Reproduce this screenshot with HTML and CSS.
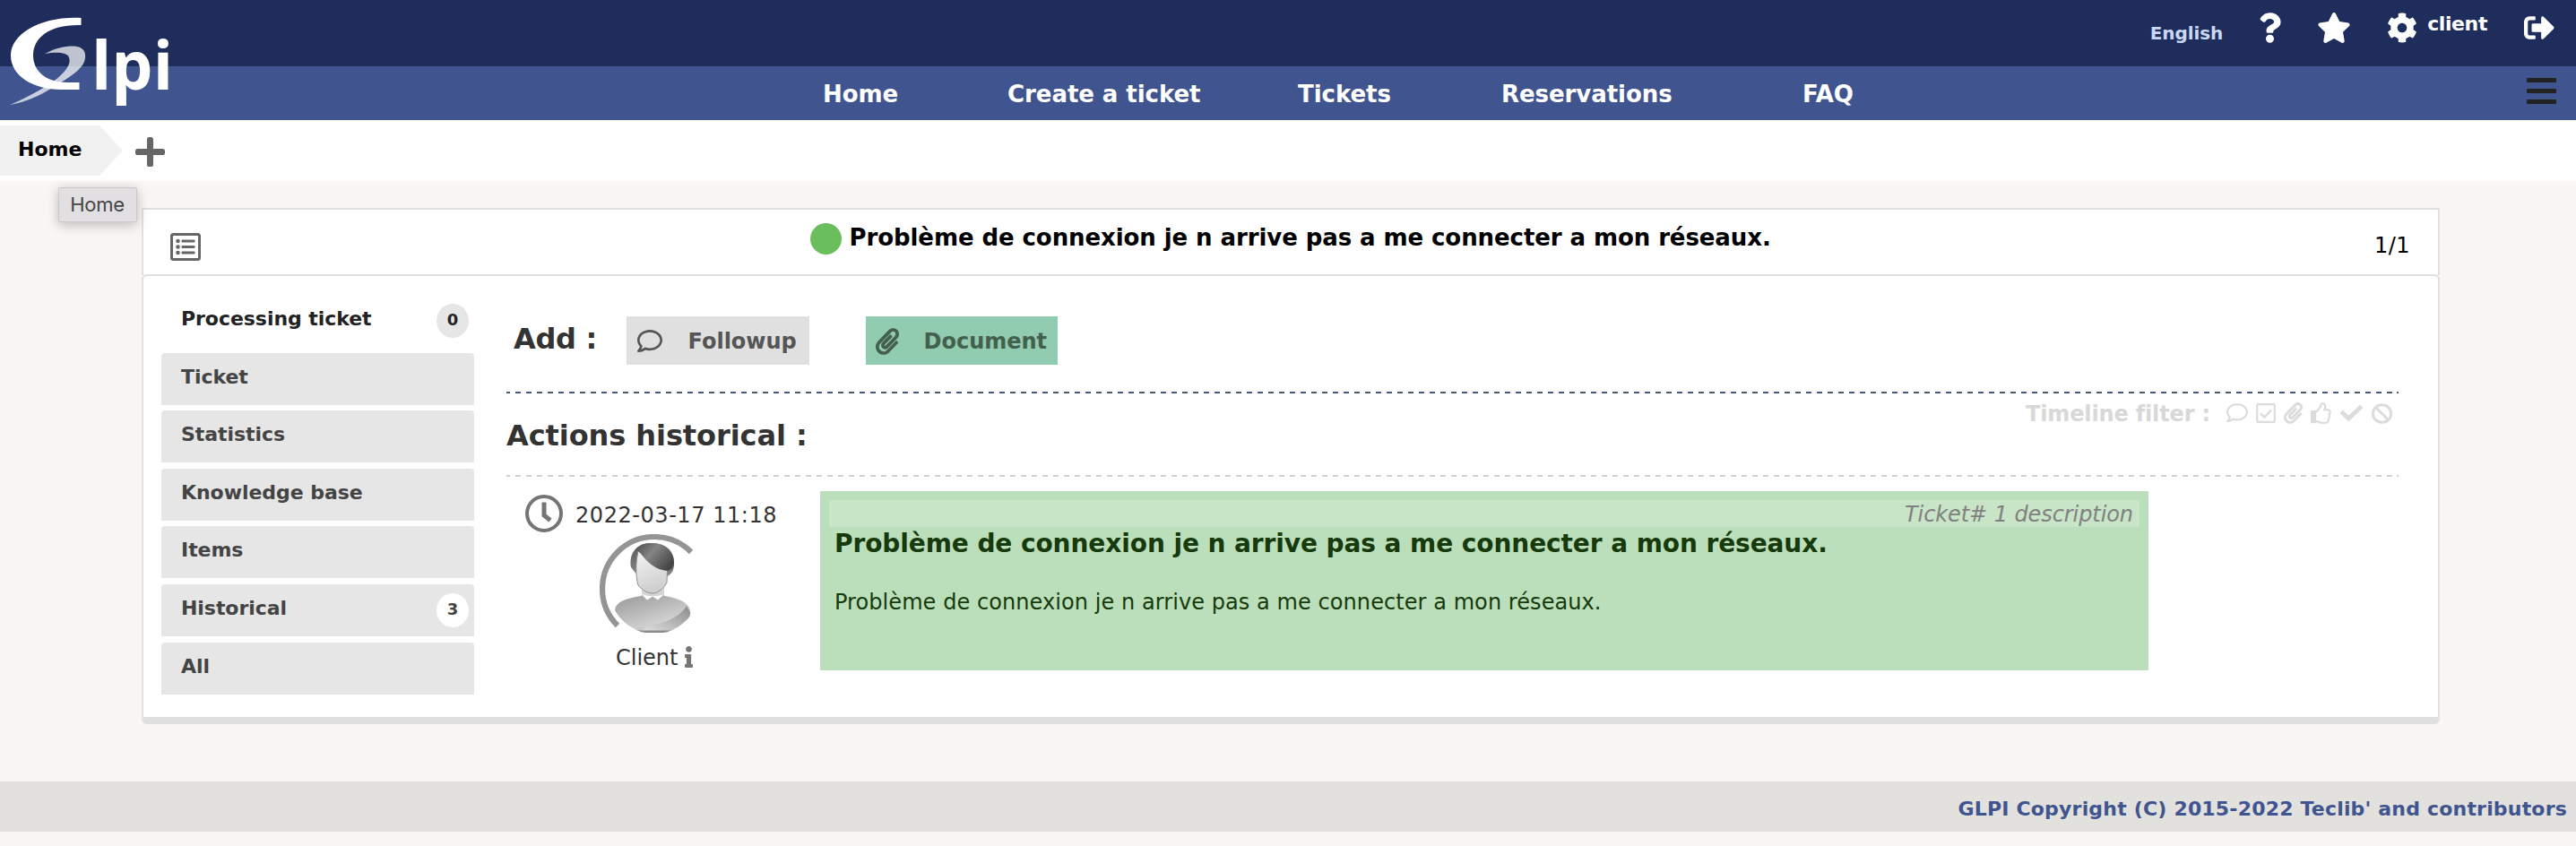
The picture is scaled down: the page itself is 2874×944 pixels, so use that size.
FILE: index.html
```html
<!DOCTYPE html>
<html lang="en">
<head>
<meta charset="utf-8">
<title>GLPI - Ticket</title>
<link rel="stylesheet" href="styles.css">
</head>
<body>
<svg class="sprite" width="0" height="0">
  <symbol id="comment" viewBox="0 32 512 448" preserveAspectRatio="none"><path d="M256 32C114.6 32 0 125.1 0 240c0 47.6 19.9 91.2 52.9 126.3C38 405.7 7 439.1 6.5 439.5c-6.6 7-8.4 17.2-4.6 26S14.4 480 24 480c61.5 0 110-25.7 139.1-46.3C192 442.8 223.2 448 256 448c141.4 0 256-93.1 256-208S397.4 32 256 32zm0 368c-26.7 0-53.1-4.1-78.4-12.1l-22.7-7.2-19.5 13.8c-14.3 10.1-33.9 21.4-57.5 29 7.3-12.1 14.4-25.7 19.9-40.2l10.6-28.1-20.6-21.8C69.7 314.1 48 282.2 48 240c0-88.2 93.3-160 208-160s208 71.8 208 160-93.3 160-208 160z"/></symbol>
  <symbol id="clip" viewBox="0 0 448 512"><path d="M43.246 466.142c-58.43-60.289-57.341-157.511 1.386-217.581L254.392 34c44.316-45.332 116.351-45.336 160.671 0 43.89 44.894 43.943 117.329 0 162.276L232.214 383.128c-29.855 30.537-78.633 30.111-107.982-.998-28.275-29.97-27.368-77.473 1.452-106.953l143.743-146.835c6.182-6.314 16.312-6.422 22.626-.241l22.861 22.379c6.315 6.182 6.422 16.312.241 22.626L171.427 319.927c-4.932 5.045-5.236 13.428-.648 18.292 4.372 4.634 11.245 4.711 15.688.165l182.849-186.851c19.613-20.062 19.613-52.725-.011-72.798-19.189-19.627-49.957-19.637-69.154 0L90.39 293.295c-34.763 35.56-35.299 93.12-1.191 128.313 34.01 35.093 88.985 35.137 123.058.286l172.06-175.999c6.177-6.319 16.307-6.433 22.626-.256l22.877 22.364c6.319 6.177 6.434 16.307.256 22.626l-172.06 175.998c-59.576 60.938-155.943 60.216-214.77-.485z"/></symbol>
</svg>

<header class="top">
  <div class="lang">English</div>
  <svg class="i-question" viewBox="0 0 384 512"><path d="M202.021 0C122.202 0 70.503 32.703 29.914 91.026c-7.363 10.58-5.093 25.086 5.178 32.874l43.138 32.709c10.373 7.865 25.132 6.026 33.253-4.148 25.049-31.381 43.63-49.449 82.757-49.449 30.764 0 68.816 19.799 68.816 49.631 0 22.552-18.617 34.134-48.993 51.164-35.423 19.86-82.299 44.576-82.299 106.405V320c0 13.255 10.745 24 24 24h72.471c13.255 0 24-10.745 24-24v-5.773c0-42.86 125.268-44.645 125.268-160.627C377.504 66.256 286.902 0 202.021 0zM192 373.459c-38.196 0-69.271 31.075-69.271 69.271 0 38.195 31.075 69.27 69.271 69.27s69.271-31.075 69.271-69.271-31.075-69.27-69.271-69.27z"/></svg>
  <svg class="i-star" viewBox="0 0 576 512"><path d="M259.3 17.8L194 150.2 47.9 171.5c-26.2 3.8-36.7 36.1-17.7 54.6l105.7 103-25 145.5c-4.5 26.3 23.2 46 46.4 33.7L288 439.6l130.7 68.7c23.2 12.2 50.9-7.4 46.4-33.7l-25-145.5 105.7-103c19-18.5 8.5-50.8-17.7-54.6L382 150.2 316.7 17.8c-11.7-23.6-45.6-23.9-57.4 0z"/></svg>
  <svg class="i-cog" viewBox="0 0 512 512"><path d="M487.4 315.7l-42.6-24.6c4.3-23.2 4.3-47 0-70.2l42.6-24.6c4.9-2.8 7.1-8.6 5.5-14-11.1-35.6-30-67.8-54.7-94.6-3.8-4.1-10-5.1-14.8-2.3L380.8 110c-17.9-15.4-38.5-27.3-60.8-35.1V25.8c0-5.6-3.9-10.5-9.4-11.7-36.7-8.2-74.3-7.8-109.2 0-5.5 1.2-9.4 6.1-9.4 11.7V75c-22.2 7.9-42.8 19.8-60.8 35.1L88.7 85.5c-4.9-2.8-11-1.9-14.8 2.3-24.7 26.7-43.6 58.9-54.7 94.6-1.7 5.4.6 11.2 5.5 14L67.3 221c-4.3 23.2-4.3 47 0 70.2l-42.6 24.6c-4.9 2.8-7.1 8.6-5.5 14 11.1 35.6 30 67.8 54.7 94.6 3.8 4.1 10 5.1 14.8 2.3l42.6-24.6c17.9 15.4 38.5 27.3 60.8 35.1v49.2c0 5.6 3.9 10.5 9.4 11.7 36.7 8.2 74.3 7.8 109.2 0 5.5-1.2 9.4-6.1 9.4-11.7v-49.2c22.2-7.9 42.8-19.8 60.8-35.1l42.6 24.6c4.9 2.8 11 1.9 14.8-2.3 24.7-26.7 43.6-58.9 54.7-94.6 1.500-5.500-.700-11.300-5.600-14.100zM256 336c-44.100 0-80-35.900-80-80s35.900-80 80-80 80 35.900 80 80-35.900 80-80 80z"/></svg>
  <div class="user">client</div>
  <svg class="i-out" viewBox="0 0 512 512"><path d="M497 273L329 441c-15 15-41 4.500-41-17v-96H152c-13.300 0-24-10.700-24-24v-96c0-13.300 10.700-24 24-24h136V88c0-21.400 25.900-32 41-17l168 168c9.300 9.400 9.300 24.600 0 34zM192 436v-40c0-6.600-5.400-12-12-12H96c-17.700 0-32-14.300-32-32V160c0-17.700 14.300-32 32-32h84c6.600 0 12-5.400 12-12V76c0-6.600-5.400-12-12-12H96c-53 0-96 43-96 96v192c0 53 43 96 96 96h84c6.600 0 12-5.400 12-12z"/></svg>
</header>
<nav class="menu">
  <a>Home</a><a>Create a ticket</a><a>Tickets</a><a>Reservations</a><a>FAQ</a>
  <div class="burger"><i></i><i></i><i></i></div>
</nav>
<svg class="logo" width="200" height="130" viewBox="0 0 200 130">
  <path fill="#fff" fill-opacity=".72" d="M50 60C62 53 75 51 83 51.500C92 52 96 57 95 65C94 75 82 83 68 92C50 104 30 114 11 117C30 109 48 99 62 89C72 81 80 72 77 64C75 58 62 58 50 60Z"/>
  <path fill="#fff" d="M90.500 20C45 18 12 38 12 62C12 85 38 100 68 100L88.500 100L88.500 92L75 92C50 92 37 78 37 62C37 42 55 27 90.500 28Z"/>
  <text class="logo-text" x="102" y="99.500" textLength="91" lengthAdjust="spacingAndGlyphs">lpi</text>
</svg>
<div class="crumbs">
  <div class="crumb">Home</div>
  <svg class="i-plus" viewBox="0 32 448 448" preserveAspectRatio="none"><path d="M416 208H272V64c0-17.670-14.330-32-32-32h-32c-17.670 0-32 14.330-32 32v144H32c-17.670 0-32 14.330-32 32v32c0 17.670 14.330 32 32 32h144v144c0 17.670 14.330 32 32 32h32c17.670 0 32-14.330 32-32V304h144c17.670 0 32-14.330 32-32v-32c0-17.670-14.330-32-32-32z"/></svg>
  <div class="tip">Home</div>
</div>

<main class="page">
  <div class="head">
    <svg class="i-list" viewBox="0 0 34 31" fill="none"><rect x="1.500" y="1.500" width="31" height="28" rx="2" stroke="#666" stroke-width="3"/><g fill="#666"><circle cx="8.500" cy="9" r="2.300"/><circle cx="8.500" cy="15.500" r="2.300"/><circle cx="8.500" cy="22" r="2.300"/><rect x="12.500" y="7.400" width="15" height="3.200" rx="1"/><rect x="12.500" y="13.900" width="15" height="3.200" rx="1"/><rect x="12.500" y="20.400" width="15" height="3.200" rx="1"/></g></svg>
    <div class="title"><span class="dot"></span><span>Problème de connexion je n arrive pas a me connecter a mon réseaux.</span></div>
    <div class="count">1/1</div>
  </div>
  <div class="body">
    <ul class="tabs">
      <li class="tab active">Processing ticket<b>0</b></li>
      <li class="tab">Ticket</li>
      <li class="tab">Statistics</li>
      <li class="tab">Knowledge base</li>
      <li class="tab">Items</li>
      <li class="tab">Historical<b>3</b></li>
      <li class="tab">All</li>
    </ul>
    <section class="content">
      <div class="add">
        <h2>Add :</h2>
        <div class="btn follow"><svg><use href="#comment"/></svg><span>Followup</span></div>
        <div class="btn doc"><svg><use href="#clip"/></svg><span>Document</span></div>
      </div>
      <div class="rule blue"></div>
      <div class="hist">
        <h2>Actions historical :</h2>
        <div class="filter">
          <span>Timeline filter :</span>
          <svg class="f1"><use href="#comment"/></svg>
          <svg class="f2" viewBox="0 0 22 22" fill="none" stroke="#dcdcdc"><rect x="1.200" y="1.200" width="19.600" height="19.600" rx="1.500" stroke-width="2.200"/><path d="M5 11.500L9.500 15.500L17 7.500" stroke-width="2.500"/></svg>
          <svg class="f3"><use href="#clip"/></svg>
          <svg class="f4" viewBox="0 0 484 512" preserveAspectRatio="none"><path d="M466.270 286.690C475.040 271.840 480 256 480 236.850c0-44.015-37.218-85.580-85.820-85.580H357.700c4.920-12.810 8.850-28.130 8.850-46.540C366.550 31.936 328.860 0 271.280 0c-61.607 0-58.093 94.933-71.760 108.600-22.747 22.747-49.615 66.447-68.760 83.400H32c-17.673 0-32 14.327-32 32v240c0 17.673 14.327 32 32 32h64c14.893 0 27.408-10.174 30.978-23.950 44.509 1.001 75.060 39.940 177.802 39.940 7.220 0 15.220.010 22.220.010 77.117 0 111.986-39.423 112.940-95.330 13.319-18.425 20.299-43.122 17.340-66.990 9.854-18.452 13.664-40.343 8.990-62.990zm-61.750 53.830c12.560 21.130 1.260 49.410-13.940 57.570 7.700 48.780-17.608 65.900-53.120 65.900h-37.820c-71.639 0-118.029-37.820-171.640-37.820V240h10.920c28.360 0 67.980-70.890 94.540-97.460 28.360-28.360 18.910-75.630 37.820-94.540 47.270 0 47.270 32.980 47.270 56.730 0 39.170-28.360 56.720-28.360 94.540h103.990c21.110 0 37.730 18.910 37.820 37.820.090 18.900-12.820 37.810-22.270 37.810 13.489 14.555 16.371 45.236-5.210 65.620z"/></svg>
          <svg class="f5" viewBox="0 65 512 382" preserveAspectRatio="none"><path d="M173.898 439.404l-166.400-166.400c-9.997-9.997-9.997-26.206 0-36.204l36.203-36.204c9.997-9.998 26.207-9.998 36.204 0L192 312.690 432.095 72.596c9.997-9.997 26.207-9.997 36.204 0l36.203 36.204c9.997 9.997 9.997 26.206 0 36.204l-294.400 294.401c-9.998 9.997-26.207 9.997-36.204-.001z"/></svg>
          <svg class="f6" viewBox="0 0 24 23" fill="none" stroke="#dcdcdc" stroke-width="3"><ellipse cx="12" cy="11.500" rx="10.200" ry="9.800"/><path d="M5 4.500L19 18.500"/></svg>
        </div>
      </div>
      <div class="rule"></div>
      <div class="item">
        <div class="who">
          <div class="when">
            <svg class="i-clock" viewBox="0 0 42 42" fill="none" stroke="#757575"><circle cx="21" cy="21" r="19" stroke-width="4"/><path d="M21 8.500V23L28 28.500" stroke-width="5"/></svg>
            <span>2022-03-17 11:18</span>
          </div>
          <svg class="avatar" viewBox="669 596 122 122">
            <defs>
              <clipPath id="round"><circle cx="730" cy="657" r="50"/></clipPath>
              <linearGradient id="hair" x1="0" y1="0" x2="1" y2=".6"><stop offset="0" stop-color="#4a4a4a"/><stop offset=".45" stop-color="#858585"/><stop offset="1" stop-color="#484848"/></linearGradient>
              <linearGradient id="side" x1="0" y1="0" x2="0" y2="1"><stop offset="0" stop-color="#5a5a5a"/><stop offset="1" stop-color="#858585"/></linearGradient>
              <linearGradient id="face" x1="0" y1="0" x2=".3" y2="1"><stop offset="0" stop-color="#f4f4f4"/><stop offset="1" stop-color="#cfcfcf"/></linearGradient>
              <linearGradient id="coat" x1="0" y1="0" x2=".6" y2="1"><stop offset="0" stop-color="#999"/><stop offset="1" stop-color="#dedede"/></linearGradient>
              <linearGradient id="fold" x1="1" y1="0" x2="0" y2="1"><stop offset="0" stop-color="#8a8a8a"/><stop offset="1" stop-color="#e2e2e2"/></linearGradient>
            </defs>
            <path d="M689 698A57.900 57.900 0 0 1 771 616" fill="none" stroke="#949494" stroke-width="6.200"/>
            <g clip-path="url(#round)">
              <path d="M716 656V668H741V656Z" fill="#d4d4d4"/>
              <path d="M686 680C689 669 702 668 716 664.500L722 669L728 665L734 669L740 664.500C752 667 768 670 770 682C771 692 764 699 750 706H710C697 700 686 692 686 680Z" fill="url(#coat)"/>
              <path d="M741 665C754 668 764 672 766 677C760 687 745 696 722 699C710 698 704 705 712 706H750C764 699 771 692 770 682C768 670 752 667 741 665Z" fill="#c9c9c9"/>
              <path d="M766 676C759 688 742 696 722 698L716 705H748C764 699 771 692 770 683Z" fill="url(#fold)"/>
              <path d="M716.500 663L722 669.500L728 665.500L734 669.500L740 663.500L734 665H723Z" fill="#fff"/>
              <path d="M711 703.500H749V706H711Z" fill="#8c8c8c"/>
            </g>
            <path d="M704 633C702 622 706 606 727 606C748 606 753 621 752 629C752 637 749 641 744 643L712 643Z" fill="url(#side)"/>
            <path d="M712 615C709 628 709 642 712 653C717 659 723 662 728 662C734 662 741 656 744 650L744.500 636C732 634 722 626 715 614Z" fill="url(#face)" stroke="#8f8f8f" stroke-width="1"/>
            <path d="M710 613C714 607 720 606 727 606C744 606 752 617 752 628C752 632 750 635 745 637C731 636 722 627 715 618Z" fill="url(#hair)"/>
          </svg>
          <div class="name"><span>Client</span><svg class="i-info" viewBox="0 0 192 512" preserveAspectRatio="none"><path d="M20 424.229h20V279.771H20c-11.046 0-20-8.954-20-20V212c0-11.046 8.954-20 20-20h112c11.046 0 20 8.954 20 20v212.229h20c11.046 0 20 8.954 20 20V492c0 11.046-8.954 20-20 20H20c-11.046 0-20-8.954-20-20v-47.771c0-11.046 8.954-20 20-20zM96 0C56.235 0 24 32.235 24 72s32.235 72 72 72 72-32.235 72-72S135.764 0 96 0z"/></svg></div>
        </div>
        <article class="card">
          <div class="label"><span>Ticket# 1 description</span></div>
          <h3>Problème de connexion je n arrive pas a me connecter a mon réseaux.</h3>
          <p>Problème de connexion je n arrive pas a me connecter a mon réseaux.</p>
        </article>
      </div>
    </section>
  </div>
</main>
<footer class="foot"><span>GLPI Copyright (C) 2015-2022 Teclib' and contributors</span></footer>
</body>
</html>
```
FILE: styles.css
```css
* { box-sizing: border-box; }
body { margin: 0; height: 944px; overflow: hidden; background: #f8f7f3; font-family: Verdana, "DejaVu Sans", sans-serif; position: relative; }
h2, h3, p, ul { margin: 0; padding: 0; }
svg { display: block; flex: none; }
.sprite { position: absolute; }
span, a { white-space: nowrap; }

.top { height: 74px; background: #1f2d5c; display: flex; justify-content: flex-end; padding-right: 24px; color: #fff; fill: #fff; font-weight: bold; }
.lang { font-size: 20px; line-height: 74px; color: #c9d8f5; margin-right: 40px; letter-spacing: -.1px; }
.i-question { width: 25px; height: 34px; margin: 14px 40px 0 0; }
.i-star { width: 38px; height: 34px; margin: 14px 40px 0 0; }
.i-cog { width: 34px; height: 34px; margin: 14px 11px 0 0; }
.user { font-size: 22px; line-height: 54px; height: 54px; letter-spacing: -.4px; margin-right: 41px; }
.i-out { width: 34px; height: 34px; margin-top: 14px; }

.menu { height: 60px; background: #40558f; display: grid; grid-template-columns: 206px 324px 227px 336px auto 1fr; padding: 1px 22px 0 918px; color: #fff; font-size: 26px; font-weight: bold; line-height: 60px; letter-spacing: -.05px; }
.burger { justify-self: end; width: 33px; padding-top: 12px; display: flex; flex-direction: column; gap: 7px; }
.burger i { height: 5px; background: #222; border-radius: 1px; }
.logo { position: absolute; left: 0; top: 0; }
.logo-text { font: bold 76px "Open Sans", sans-serif; fill: #fff; }

.crumbs { height: 68px; background: #fff; padding-top: 6px; display: flex; position: relative; }
.crumb { width: 137px; height: 56px; padding-left: 20px; background: #f1f1f1; clip-path: polygon(0 0, 111px 0, 137px 28px, 111px 56px, 0 56px); font-size: 22px; font-weight: bold; line-height: 53px; }
.i-plus { width: 33px; height: 33px; margin: 13px 0 0 14px; fill: #666; }
.tip { position: absolute; z-index: 2; left: 65px; top: 75px; width: 88px; height: 39px; background: #e2dfe3; border: 1px solid #c9c7ca; border-radius: 2px; box-shadow: 0 3px 14px rgba(0,0,0,.25); color: #444; font: 22px/37px Inter, sans-serif; text-align: center; letter-spacing: -.3px; padding-right: 1px; }

.page { margin: 30px 152px 0 158px; }
.head { height: 75px; background: #fff; border: 2px solid #e0e0e0; border-bottom: 0; display: grid; grid-template-columns: 744px 1fr auto; padding: 0 31px 0 0; }
.i-list { width: 34px; height: 31px; margin: 26px 0 0 30px; }
.title { display: flex; gap: 8.500px; font-size: 26px; font-weight: bold; line-height: 62px; letter-spacing: -.08px; }
.dot { width: 35px; height: 35px; border-radius: 50%; background: #6abf5c; margin-top: 15px; }
.count { font-size: 24px; line-height: 80px; letter-spacing: .5px; }
.body { height: 502px; margin-top: -1px; background: #fff; border: 2px solid #e0e0e0; border-bottom: 8px solid #dfdfdf; border-radius: 6px; display: flex; padding-left: 20px; gap: 36px; }
.tabs { list-style: none; width: 349px; padding-top: 21px; display: flex; flex-direction: column; gap: 6.600px; }
.tab { height: 58px; padding-left: 22px; background: #e6e6e6; border-radius: 4px 4px 0 0; color: #444; font-size: 22px; font-weight: bold; line-height: 53px; letter-spacing: -.05px; display: flex; justify-content: space-between; padding-right: 6px; }
.tab b { width: 36px; height: 38px; margin-top: 10px; border-radius: 50%; background: #fff; font-size: 18px; line-height: 36px; text-align: center; }
.tab.active { background: none; color: #222; }
.tab.active b { background: #e6e6e6; }

.content { width: 2111px; padding-top: 45px; }
.content h2 { font-size: 32px; line-height: 40px; color: #333; }
.add { height: 84px; display: flex; padding-left: 8px; }
.add h2 { width: 126px; padding-top: 5px; letter-spacing: -.3px; }
.btn { height: 54px; display: flex; align-items: center; font-size: 24px; font-weight: bold; letter-spacing: 0; padding-top: 1px; }
.follow { width: 204px; background: #e0e0e0; color: #555; fill: #555; padding-left: 12px; margin-right: 63px; }
.follow svg { width: 28px; height: 25px; margin-right: 28.500px; }
.doc { width: 214px; background: #91ccb0; color: #43604f; fill: #43604f; padding-left: 11px; }
.doc svg { width: 26px; height: 30px; margin-right: 27.500px; }
.rule { height: 2px; background: repeating-linear-gradient(90deg, #d0d0d0 0 6px, transparent 6px 12px) -2px 0; }
.rule.blue { background-image: repeating-linear-gradient(90deg, #47597a 0 6px, transparent 6px 12px); }
.hist { height: 91px; display: flex; justify-content: space-between; }
.hist h2 { padding-top: 27px; letter-spacing: -.08px; }
.filter { display: flex; color: #d8d8d8; fill: #dcdcdc; font-size: 24px; font-weight: bold; line-height: 46px; letter-spacing: -.15px; padding-right: 6px; }
.f1 { width: 24px; height: 21px; margin: 11px 9px 0 18px; }
.f2 { width: 22px; height: 22px; margin: 11px 9px 0 0; }
.f3 { width: 21px; height: 24px; margin: 10px 9px 0 0; }
.f4 { width: 23px; height: 24px; margin: 10px 10px 0 0; }
.f5 { width: 25px; height: 18px; margin: 13px 9px 0 0; }
.f6 { width: 25px; height: 23px; margin-top: 11px; }
.item { display: flex; padding-top: 16px; }
.who { width: 350px; color: #333; font-size: 24px; }
.when { display: flex; height: 48px; padding: 4px 0 0 21px; gap: 14px; line-height: 47px; letter-spacing: .55px; }
.i-clock { width: 42px; height: 42px; }
.avatar { width: 122px; height: 122px; margin-left: 104px; }
.name { display: flex; margin-top: -5px; padding-left: 122px; gap: 8px; line-height: 42px; }
.i-info { width: 9px; height: 24px; margin-top: 8px; fill: #757575; }
.card { width: 1482px; height: 200px; padding: 10px; background: #bbdfba; color: #163a0c; }
.label { height: 30px; background: #c9e5c7; color: #808080; font-style: italic; font-size: 24px; line-height: 32px; letter-spacing: -.08px; text-align: right; padding-right: 7px; }
.card h3 { font-size: 28px; line-height: 37px; padding-left: 6px; letter-spacing: -.08px; white-space: nowrap; }
.card p { font-size: 24px; line-height: 36px; padding: 29px 0 0 6px; letter-spacing: .07px; white-space: nowrap; }
.foot { height: 56px; margin-top: 64px; background: #e2e1dd; padding-right: 10px; text-align: right; color: #40558f; font-size: 22px; font-weight: bold; line-height: 61px; letter-spacing: .19px; }
```
